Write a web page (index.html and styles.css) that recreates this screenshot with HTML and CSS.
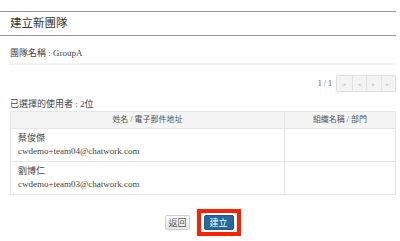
FILE: index.html
```html
<!DOCTYPE html>
<html lang="zh-Hant">
<head>
  <meta charset="UTF-8" />
  <title>建立新團隊</title>
  <link rel="stylesheet" href="styles.css">
</head>
<body>
  <div class="page">
    <h1 class="title">建立新團隊</h1>
    <div class="team-name">團隊名稱 : GroupA</div>

    <div class="pager">
      <span class="pager-count">1 / 1</span>
      <div class="pager-btns">
        <button class="pg" disabled>|◂</button>
        <button class="pg" disabled>◂</button>
        <button class="pg" disabled>▸</button>
        <button class="pg" disabled>▸|</button>
      </div>
    </div>

    <div class="selected">已選擇的使用者 : 2位</div>
    <table class="users">
      <thead>
        <tr><th class="col-name">姓名 / 電子郵件地址</th><th>組織名稱 / 部門</th></tr>
      </thead>
      <tbody>
        <tr>
          <td><div class="uname">蔡俊傑</div><div class="umail">cwdemo+team04@chatwork.com</div></td>
          <td></td>
        </tr>
        <tr>
          <td><div class="uname">劉博仁</div><div class="umail">cwdemo+team03@chatwork.com</div></td>
          <td></td>
        </tr>
      </tbody>
    </table>

    <div class="actions">
      <button class="btn">返回</button>
      <span class="highlight"><button class="btn btn-primary">建立</button></span>
    </div>
  </div>
</body>
</html>
```

FILE: styles.css
```css
*{margin:0;padding:0;box-sizing:border-box;}
body{background:#fff;color:#444;font-family:"Liberation Serif","Noto Sans CJK TC",serif;font-size:9px;}
.page{padding:11px 4px 0 10px;}

/* header */
.title{font-weight:normal;font-size:11.5px;color:#333;line-height:22px;
  border-top:1px solid #999;border-bottom:1px solid #999;margin-left:-10px;padding:0 0 1px 10px;}
.team-name{margin-top:9px;padding:3px 0 4px;border-bottom:2px solid #f3f3f3;line-height:11px;color:#444;}

/* pager */
.pager{display:flex;justify-content:flex-end;align-items:center;gap:4px;margin-top:10px;}
.pager-count{color:#555;font-size:8px;}
.pager-btns{display:flex;border:1px solid #ddd;border-radius:2px;}
.pg{width:14.5px;height:15px;border:none;border-left:1px solid #e2e2e2;background:#f3f3f3;
  color:#c8c8c8;font-size:5px;font-family:inherit;}
.pg:first-child{border-left:none;}

/* table */
.selected{margin-top:7px;line-height:11px;}
.users{width:100%;border-collapse:collapse;margin-top:1px;border:1px solid #e6e6e6;}
.users th{font-weight:normal;background:#f4f4f4;height:17px;padding:0;font-size:8px;line-height:10px;color:#555;
  border:1px solid #e6e6e6;}
.users .col-name{width:274px;}
.users td{border:1px solid #e6e6e6;padding:3px 7px;vertical-align:top;height:32px;}
.uname,.umail{line-height:13px;font-size:9px;}

/* actions */
.actions{display:flex;justify-content:center;align-items:center;gap:7px;margin-top:14px;}
.btn{font-family:inherit;font-size:9px;line-height:10px;padding:0 2px;height:15px;border:1px solid #ccc;border-radius:2px;
  background:linear-gradient(#fff,#e6e6e6);color:#555;}
.btn-primary{width:30px;background:#246a9e;border-color:#1d5a87;color:#fff;}
.highlight{display:inline-flex;border:4px solid #ff2000;padding:2px 3px;}
```
